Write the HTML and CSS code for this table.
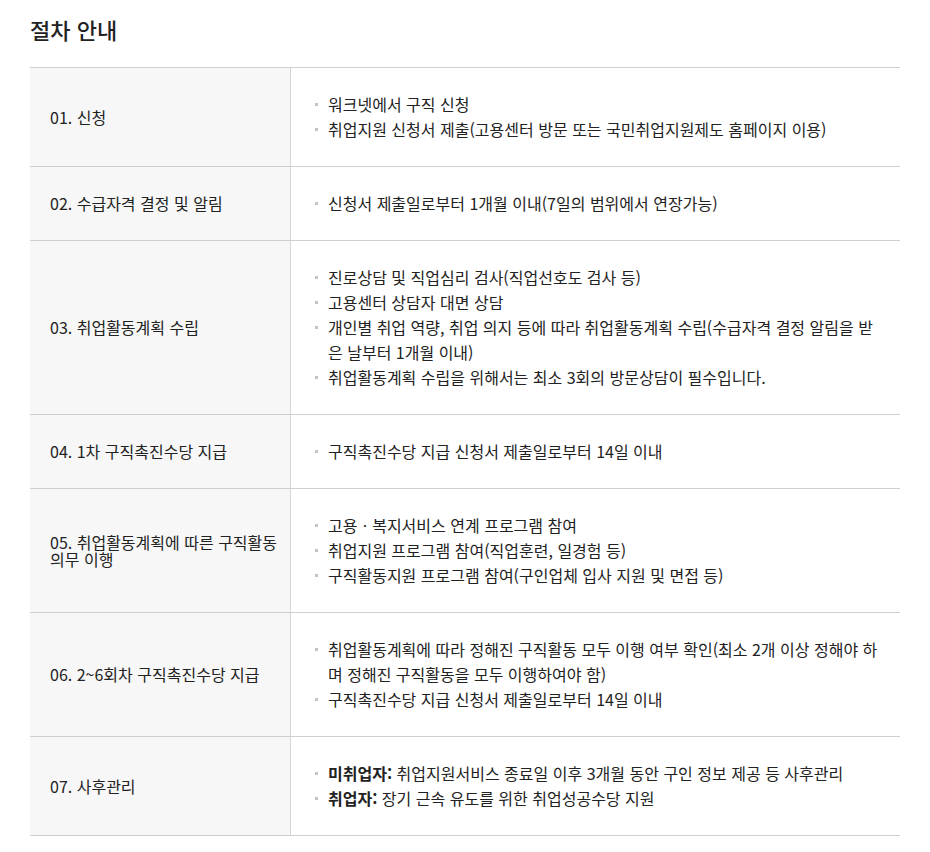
FILE: index.html
```html
<!DOCTYPE html>
<html lang="ko">
<head>
<meta charset="utf-8">
<title>절차 안내</title>
<link rel="stylesheet" href="styles.css">
</head>
<body>
<section class="procedure">
  <h2 class="title">절차 안내</h2>
  <div class="steps">
    <div class="step">
      <div class="step-name">01. 신청</div>
      <ul class="step-desc">
        <li>워크넷에서 구직 신청</li>
        <li>취업지원 신청서 제출(고용센터 방문 또는 국민취업지원제도 홈페이지 이용)</li>
      </ul>
    </div>
    <div class="step">
      <div class="step-name">02. 수급자격 결정 및 알림</div>
      <ul class="step-desc">
        <li>신청서 제출일로부터 1개월 이내(7일의 범위에서 연장가능)</li>
      </ul>
    </div>
    <div class="step">
      <div class="step-name">03. 취업활동계획 수립</div>
      <ul class="step-desc">
        <li>진로상담 및 직업심리 검사(직업선호도 검사 등)</li>
        <li>고용센터 상담자 대면 상담</li>
        <li>개인별 취업 역량, 취업 의지 등에 따라 취업활동계획 수립(수급자격 결정 알림을 받은 날부터 1개월 이내)</li>
        <li>취업활동계획 수립을 위해서는 최소 3회의 방문상담이 필수입니다.</li>
      </ul>
    </div>
    <div class="step">
      <div class="step-name">04. 1차 구직촉진수당 지급</div>
      <ul class="step-desc">
        <li>구직촉진수당 지급 신청서 제출일로부터 14일 이내</li>
      </ul>
    </div>
    <div class="step">
      <div class="step-name">05. 취업활동계획에 따른 구직활동 의무 이행</div>
      <ul class="step-desc">
        <li>고용ㆍ복지서비스 연계 프로그램 참여</li>
        <li>취업지원 프로그램 참여(직업훈련, 일경험 등)</li>
        <li>구직활동지원 프로그램 참여(구인업체 입사 지원 및 면접 등)</li>
      </ul>
    </div>
    <div class="step">
      <div class="step-name">06. 2~6회차 구직촉진수당 지급</div>
      <ul class="step-desc">
        <li>취업활동계획에 따라 정해진 구직활동 모두 이행 여부 확인(최소 2개 이상 정해야 하며 정해진 구직활동을 모두 이행하여야 함)</li>
        <li>구직촉진수당 지급 신청서 제출일로부터 14일 이내</li>
      </ul>
    </div>
    <div class="step">
      <div class="step-name">07. 사후관리</div>
      <ul class="step-desc">
        <li><strong>미취업자:</strong> 취업지원서비스 종료일 이후 3개월 동안 구인 정보 제공 등 사후관리</li>
        <li><strong>취업자:</strong> 장기 근속 유도를 위한 취업성공수당 지원</li>
      </ul>
    </div>
  </div>
</section>
</body>
</html>
```

FILE: styles.css
```css
html, body {
  margin: 0;
  padding: 0;
  background: #fff;
}
body {
  font-family: "Noto Sans CJK KR", "Noto Sans", sans-serif;
  color: #222;
}
.procedure {
  padding: 13px 30px 0 30px;
}
.title {
  margin: 0 0 22px 0;
  font-size: 22px;
  line-height: 32px;
  font-weight: 500;
  color: #222;
}
.steps {
  border-top: 1px solid #cfcfcf;
}
.step {
  display: grid;
  grid-template-columns: 261px 1fr;
  border-bottom: 1px solid #cfcfcf;
}
.step-name {
  background: #f7f7f7;
  border-right: 1px solid #d5d5d5;
  display: flex;
  align-items: center;
  padding: 0 10px 0 20px;
  font-size: 16px;
  line-height: 17px;
  word-break: keep-all;
  color: #222;
}
.step-desc {
  list-style: none;
  margin: 0;
  padding: 24px 18px 24px 24px;
  font-size: 16px;
  line-height: 25px;
  color: #222;
}
.step-desc li {
  position: relative;
  padding-left: 13px;
}
.step-desc li::before {
  content: "";
  position: absolute;
  left: 0;
  top: 11px;
  width: 3px;
  height: 3px;
  background: #c4c4c4;
}
.step-desc strong {
  font-weight: 700;
}
```
